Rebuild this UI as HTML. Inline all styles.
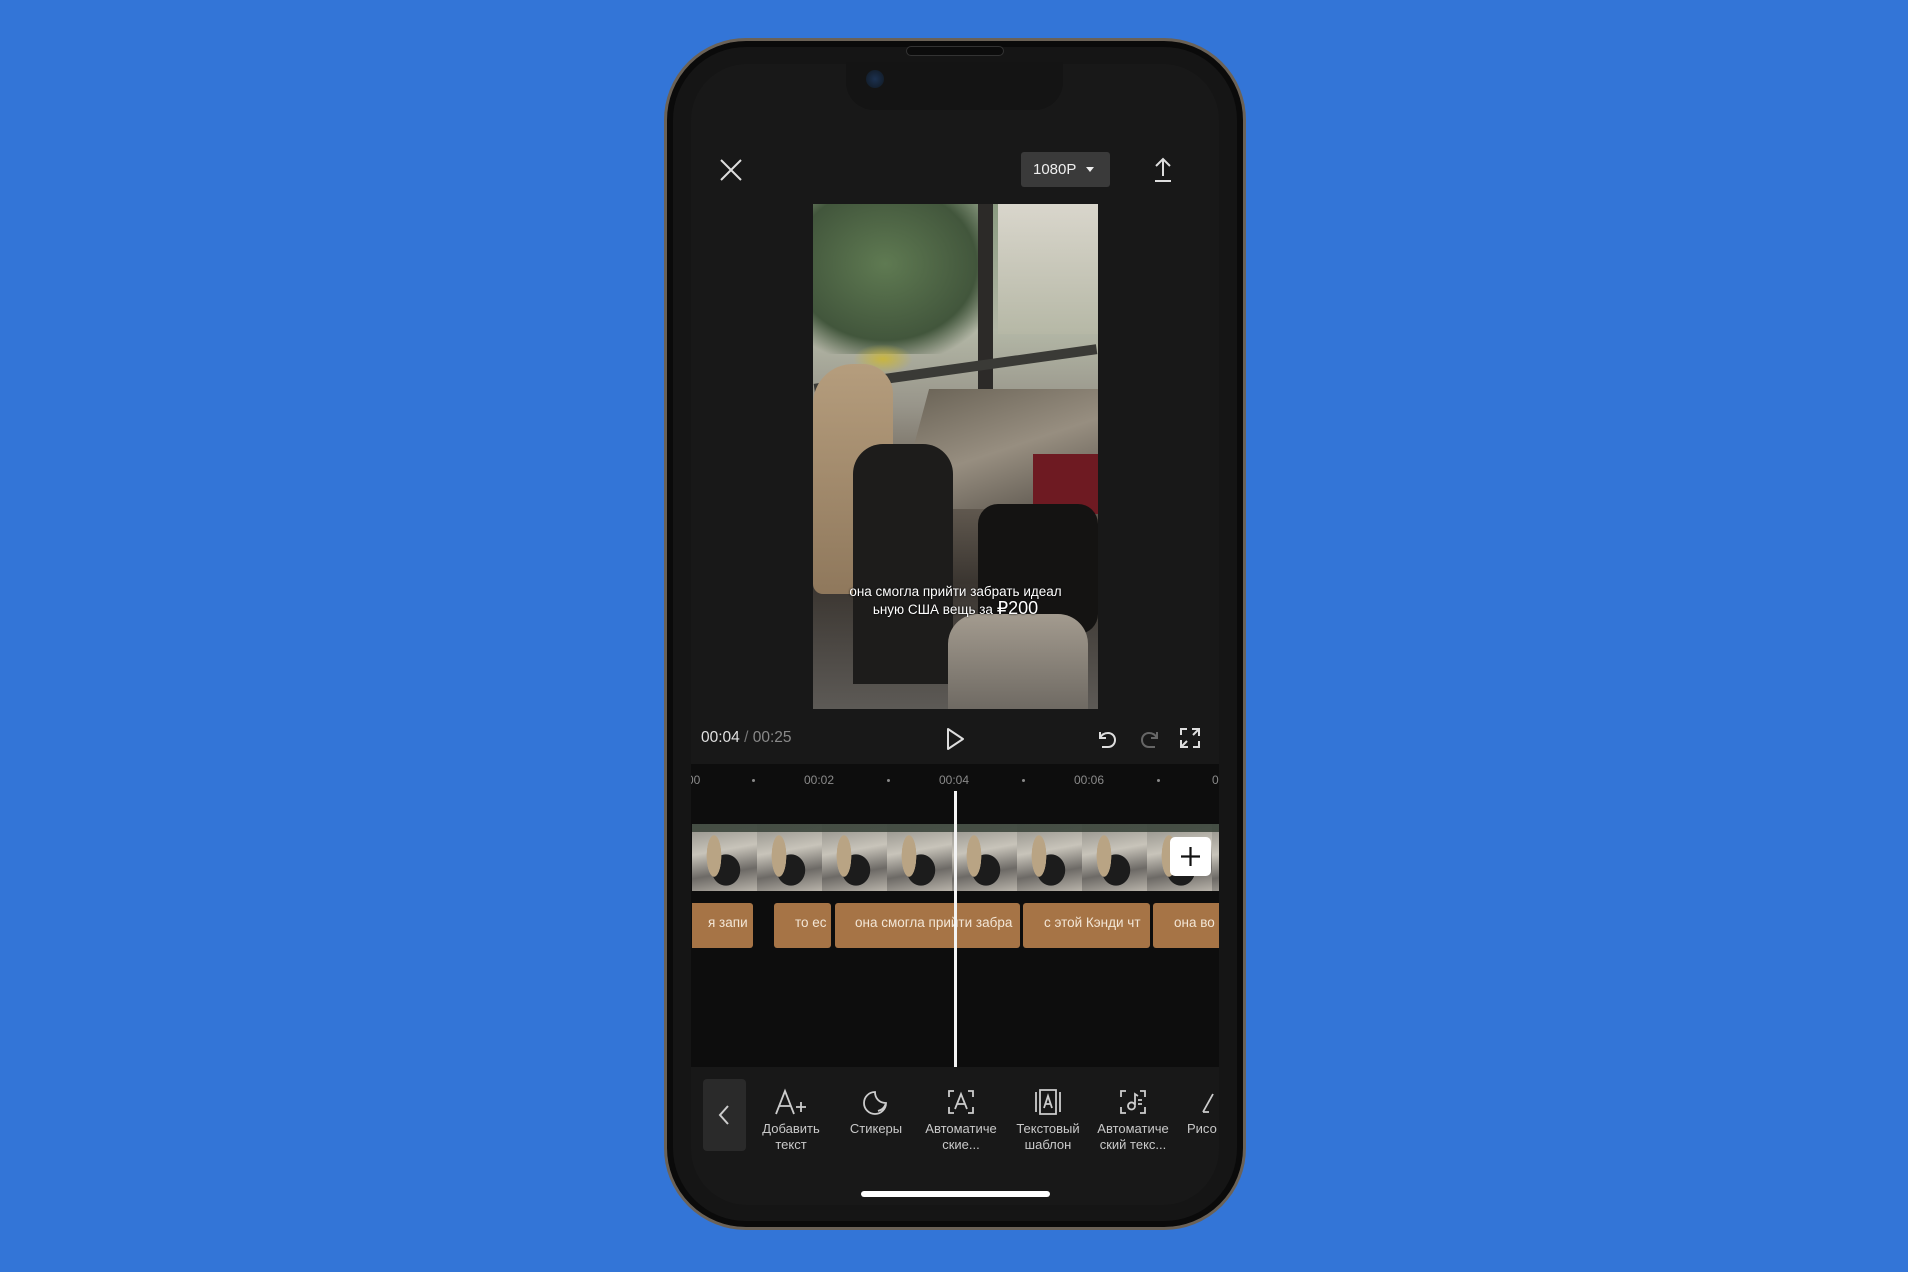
<!DOCTYPE html>
<html><head><meta charset="utf-8"><style>
*{margin:0;padding:0;box-sizing:border-box}
body{width:1908px;height:1272px;background:#3375d7;position:relative;overflow:hidden;font-family:"Liberation Sans","DejaVu Sans",sans-serif}
.abs{position:absolute}
.phone{left:664px;top:38px;width:582px;height:1192px;border-radius:82px;background:#151515;border:3px solid #6b6257;box-shadow:inset 0 0 0 6px #0a0a0a}
.screen{left:691px;top:64px;width:528px;height:1141px;border-radius:56px;background:#181818;overflow:hidden}
.notch{left:846px;top:62px;width:217px;height:48px;background:#141414;border-radius:0 0 28px 28px}
.spk{left:906px;top:46px;width:98px;height:10px;background:#0c0c0c;border-radius:5px;border:1px solid #333}
.t{color:#fff;position:absolute;white-space:nowrap}
.frame{position:absolute;top:0;width:65px;height:67px;background:
 linear-gradient(180deg,rgba(60,70,60,.9) 0 12%,transparent 12%),
 radial-gradient(ellipse 12px 34px at 22px 32px,#b9a484 0 60%,transparent 62%),
 radial-gradient(ellipse 20px 22px at 34px 46px,#1c1c1c 0 70%,transparent 72%),
 linear-gradient(170deg,#8f8d86 0%,#c8c4ba 40%,#6d6a66 70%,#b8b3aa 100%)}
.clip{position:absolute;top:903px;height:45px;background:#a67446;border-radius:3px;color:#f3e6d6;font-size:13.5px;line-height:40px;overflow:hidden;white-space:nowrap;padding-left:16px}
.tool{position:absolute;top:1088px;width:84px;text-align:center;color:#c9c9c9;font-size:13px;line-height:16px}
.tool svg{display:block;margin:0 auto 5px}
</style></head><body>
<div class="abs phone"></div>
<div class="abs screen">
 <div class="abs" style="left:122px;top:140px;width:285px;height:505px;overflow:hidden;background:linear-gradient(180deg,#8a9a80 0%,#b3b7a6 25%,#98958a 40%,#6e655a 55%,#3a3530 75%,#5d5a56 100%)">
  <div class="abs" style="left:0;top:0;width:180px;height:150px;background:radial-gradient(ellipse at 40% 40%,#5f7a52,#42563c 60%,transparent 80%)"></div>
  <div class="abs" style="left:165px;top:0;width:15px;height:210px;background:#2c2a28"></div>
  <div class="abs" style="left:185px;top:0;width:100px;height:130px;background:linear-gradient(180deg,#d9d6cc,#b6b8a6)"></div>
  <div class="abs" style="left:0;top:160px;width:285px;height:10px;background:#3a3a36;transform:rotate(-8deg)"></div>
  <div class="abs" style="left:40px;top:140px;width:60px;height:30px;background:radial-gradient(#c8b540,transparent 70%)"></div>
  <div class="abs" style="left:100px;top:185px;width:185px;height:120px;background:linear-gradient(160deg,#6d6659,#978e80 50%,#5b554d);transform:skewX(-15deg)"></div>
  <div class="abs" style="left:0;top:160px;width:80px;height:230px;background:linear-gradient(180deg,#b59d7d,#8f785c);border-radius:40px 30px 10px 10px"></div>
  <div class="abs" style="left:40px;top:240px;width:100px;height:240px;background:#1d1c1b;border-radius:30px 30px 0 0"></div>
  <div class="abs" style="left:220px;top:250px;width:65px;height:60px;background:#6e1a22"></div>
  <div class="abs" style="left:165px;top:300px;width:120px;height:130px;background:#141312;border-radius:20px"></div>
  <div class="abs" style="left:135px;top:410px;width:140px;height:95px;background:linear-gradient(180deg,#a39b8f,#6f6a63);border-radius:30px 30px 0 0"></div>
  <div class="t" style="left:0;width:285px;text-align:center;top:379px;font-size:13.5px;line-height:17px;text-shadow:0 0 2px #000">она смогла прийти забрать идеал<br>ьную США вещь за <span style="font-size:18px">₽200</span></div>
 </div>
 <svg class="abs" style="left:28px;top:94px" width="24" height="24" viewBox="0 0 24 24"><path d="M2 2L22 22M22 2L2 22" stroke="#ddd" stroke-width="2"/></svg>
 <div class="abs" style="left:330px;top:88px;width:89px;height:35px;background:#3a3a3a;border-radius:3px;color:#eee;font-size:15px;line-height:35px;padding-left:12px">1080P<span style="position:absolute;left:65px;top:15px;border:4px solid transparent;border-top:5px solid #eee"></span></div>
 <svg class="abs" style="left:461px;top:93px" width="22" height="26" viewBox="0 0 22 26"><path d="M11 2V19M4 9L11 2L18 9M3 24H19" stroke="#ddd" stroke-width="2" fill="none"/></svg>
 <div class="t" style="left:10px;top:665px;font-size:15.5px;color:#e0e0e0">00:04 <span style="color:#777">/</span> <span style="color:#8a8a8a">00:25</span></div>
 <svg class="abs" style="left:253px;top:663px" width="22" height="24" viewBox="0 0 22 24"><path d="M4 2L19 12L4 22Z" stroke="#ddd" stroke-width="2" fill="none" stroke-linejoin="round"/></svg>
 <svg class="abs" style="left:406px;top:664px" width="22" height="22" viewBox="0 0 22 22"><path d="M3 4V10H9M3 10C5 6 8 5 11 5C15 5 18 8 18 12C18 16 15 19 11 19H5" stroke="#ddd" stroke-width="2" fill="none"/></svg>
 <svg class="abs" style="left:447px;top:664px" width="22" height="22" viewBox="0 0 22 22" transform="scale(-1,1)"><path d="M3 4V10H9M3 10C5 6 8 5 11 5C15 5 18 8 18 12C18 16 15 19 11 19H5" stroke="#666" stroke-width="2" fill="none"/></svg>
 <svg class="abs" style="left:488px;top:663px" width="22" height="22" viewBox="0 0 22 22"><path d="M13 2H20V9M20 2L14 8M9 20H2V13M2 20L8 14M2 8V2H8M20 14V20H14" stroke="#ddd" stroke-width="2" fill="none"/></svg>
 <div class="abs" style="left:0;top:700px;width:528px;height:303px;background:#0d0d0d"></div>
 <div class="t" style="left:-4px;top:709px;font-size:12px;color:#8a8a8a">00</div>
 <div class="t" style="left:113px;top:709px;font-size:12px;color:#8a8a8a">00:02</div>
 <div class="t" style="left:248px;top:709px;font-size:12px;color:#8a8a8a">00:04</div>
 <div class="t" style="left:383px;top:709px;font-size:12px;color:#8a8a8a">00:06</div>
 <div class="t" style="left:521px;top:709px;font-size:12px;color:#8a8a8a">0</div>
 <div class="abs" style="left:61px;top:715px;width:3px;height:3px;background:#888;border-radius:50%"></div>
 <div class="abs" style="left:196px;top:715px;width:3px;height:3px;background:#888;border-radius:50%"></div>
 <div class="abs" style="left:331px;top:715px;width:3px;height:3px;background:#888;border-radius:50%"></div>
 <div class="abs" style="left:466px;top:715px;width:3px;height:3px;background:#888;border-radius:50%"></div>
 <div class="abs" style="left:1px;top:760px;width:528px;height:67px;overflow:hidden">
  <div class="frame" style="left:0"></div><div class="frame" style="left:65px"></div><div class="frame" style="left:130px"></div><div class="frame" style="left:195px"></div><div class="frame" style="left:260px"></div><div class="frame" style="left:325px"></div><div class="frame" style="left:390px"></div><div class="frame" style="left:455px"></div><div class="frame" style="left:520px"></div>
 </div>
 <div class="abs" style="left:479px;top:773px;width:41px;height:39px;background:#fff;border-radius:5px"><svg width="41" height="39" viewBox="0 0 41 39"><path d="M20.5 10V29M11 19.5H30" stroke="#111" stroke-width="2.2"/></svg></div>
</div>
<div class="clip" style="left:692px;width:61px;border-radius:0 3px 3px 0">я запи</div>
<div class="clip" style="left:774px;width:57px;padding-left:21px">то ес</div>
<div class="clip" style="left:835px;width:185px;padding-left:20px">она смогла прийти забра</div>
<div class="clip" style="left:1023px;width:127px;padding-left:21px">с этой Кэнди чт</div>
<div class="clip" style="left:1153px;width:66px;padding-left:21px;border-radius:3px 0 0 3px">она во</div>
<div class="abs" style="left:954px;top:791px;width:3px;height:276px;background:#f4f4f4"></div>
<div class="abs" style="left:703px;top:1079px;width:43px;height:72px;background:#2a2a2a;border-radius:4px"><svg width="43" height="72" viewBox="0 0 43 72"><path d="M25 27L17 36L25 45" stroke="#ccc" stroke-width="2" fill="none"/></svg></div>
<div class="tool" style="left:749px"><svg width="34" height="28" viewBox="0 0 34 28"><path d="M2 26L11 3L20 26M5 18H17M22 19H32M27 14V24" stroke="#ccc" stroke-width="1.8" fill="none"/></svg>Добавить<br>текст</div>
<div class="tool" style="left:834px"><svg width="30" height="28" viewBox="0 0 30 28"><path d="M25 15A11 11 0 1 1 14 4C14 10 18 15 25 15ZM25 15C23 21 20 22 17 23" stroke="#ccc" stroke-width="1.8" fill="none"/></svg>Стикеры</div>
<div class="tool" style="left:919px"><svg width="30" height="28" viewBox="0 0 30 28"><path d="M3 9V3H8M22 3H27V9M27 19V25H22M8 25H3V19M9 21L15 6L21 21M11 16H19" stroke="#ccc" stroke-width="1.8" fill="none"/></svg>Автоматиче<br>ские...</div>
<div class="tool" style="left:1006px"><svg width="30" height="28" viewBox="0 0 30 28"><path d="M3 4V24M27 4V24M7 2H23V26H7ZM11 20L15 8L19 20M12 16H18" stroke="#ccc" stroke-width="1.8" fill="none"/></svg>Текстовый<br>шаблон</div>
<div class="tool" style="left:1091px"><svg width="30" height="28" viewBox="0 0 30 28"><path d="M3 9V3H8M22 3H27V9M27 19V25H22M8 25H3V19M17 18A3.5 3.5 0 1 1 17 17.9V6L20 8M20 12H24M20 16H24" stroke="#ccc" stroke-width="1.8" fill="none"/></svg>Автоматиче<br>ский текс...</div>
<div class="tool" style="left:1163px;width:56px;overflow:hidden;text-align:left;padding-left:24px"><svg width="20" height="28" viewBox="0 0 20 28" style="margin:0 0 5px 12px"><path d="M4 24L14 6M4 24H10" stroke="#ccc" stroke-width="1.8" fill="none"/></svg>Рисо</div>
<div class="abs" style="left:861px;top:1191px;width:189px;height:6px;background:#fff;border-radius:3px"></div>
<div class="abs notch"></div>
<div class="abs spk"></div>
<div class="abs" style="left:866px;top:70px;width:18px;height:18px;border-radius:50%;background:radial-gradient(#1c3150,#101820)"></div>
</body></html>
